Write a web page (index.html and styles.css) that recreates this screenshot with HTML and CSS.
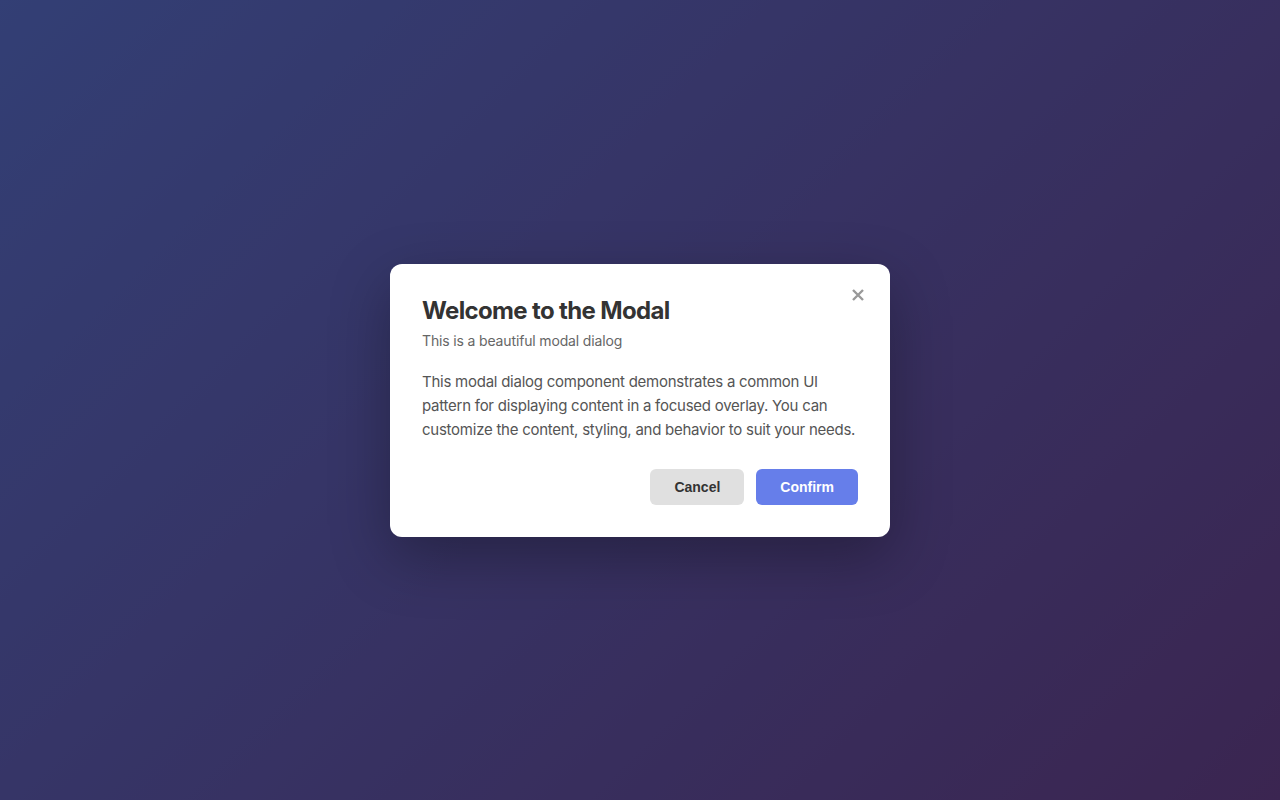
FILE: index.html
```html
<!DOCTYPE html>
<html lang="en">
<head>
<meta charset="utf-8">
<title>Modal</title>
<link rel="stylesheet" href="styles.css">
</head>
<body>
<div class="backdrop">
  <div class="overlay">
    <div class="modal" role="dialog" aria-modal="true">
      <button class="close" aria-label="Close">
        <svg width="14" height="14" viewBox="0 0 14 14" aria-hidden="true">
          <path d="M2 2 L12 12 M12 2 L2 12" stroke="#999" stroke-width="2.4" stroke-linecap="butt" fill="none"/>
        </svg>
      </button>
      <div class="header">
        <h2 class="title">Welcome to the Modal</h2>
        <p class="subtitle">This is a beautiful modal dialog</p>
      </div>
      <p class="body">This modal dialog component demonstrates a common UI pattern for displaying content in a focused overlay. You can customize the content, styling, and behavior to suit your needs.</p>
      <div class="footer">
        <button class="btn btn-cancel">Cancel</button>
        <button class="btn btn-confirm">Confirm</button>
      </div>
    </div>
  </div>
</div>
</body>
</html>
```
FILE: styles.css
```css
* { box-sizing: border-box; }
html, body { margin: 0; padding: 0; height: 100%; }
body {
  font-family: Inter, "Noto Sans", sans-serif;
}
.backdrop {
  width: 100%;
  height: 100vh;
  background: linear-gradient(135deg, #667eea 0%, #764ba2 100%);
}
.overlay {
  width: 100%;
  height: 100%;
  background: rgba(0, 0, 0, 0.5);
  display: flex;
  align-items: center;
  justify-content: center;
}
.modal {
  position: relative;
  width: 500px;
  background: #fff;
  border-radius: 12px;
  padding: 32px;
  box-shadow: 0 20px 60px rgba(0, 0, 0, 0.3);
}
.close {
  position: absolute;
  top: 24px;
  right: 25px;
  width: 14px;
  height: 14px;
  background: none;
  border: none;
  padding: 0;
  display: flex;
  cursor: pointer;
}
.header { margin-bottom: 21px; }
.title {
  margin: 0 0 7px;
  font-size: 24px;
  line-height: 29px;
  font-weight: 700;
  color: #333;
  letter-spacing: -0.65px;
}
.subtitle {
  margin: 0;
  font-size: 14px;
  line-height: 17px;
  color: #666;
  letter-spacing: -0.15px;
}
.body {
  margin: 0 0 27px;
  font-size: 15px;
  line-height: 24px;
  color: #555;
  letter-spacing: -0.25px;
}
.footer {
  display: flex;
  justify-content: flex-end;
  gap: 12px;
}
.btn {
  font-family: "Liberation Sans", Arial, sans-serif;
  font-size: 14px;
  font-weight: bold;
  height: 36px;
  padding: 0 24px;
  border: none;
  border-radius: 6px;
  cursor: pointer;
}
.btn-cancel { background: #e0e0e0; color: #333; }
.btn-confirm { background: #667eea; color: #fff; }
```
